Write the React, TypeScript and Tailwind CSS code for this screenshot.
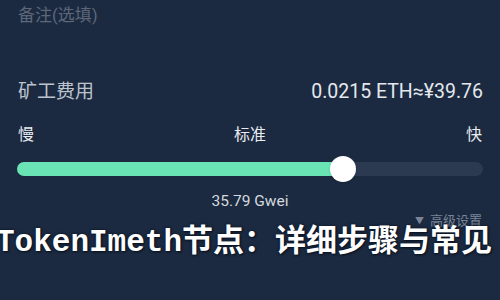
import React from 'react'

const Slider = ({ value }: { value: number }) => {
  // value: 0..1, track is 466px wide
  const fill = Math.round(466 * value)
  return (
    <div className="relative h-[14px] w-full rounded-full bg-[#2c3a51]">
      <div className="h-full rounded-full bg-[#6ae4b5]" style={{ width: fill }} />
      <div
        className="absolute top-1/2 h-[26px] w-[26px] -translate-x-1/2 -translate-y-1/2 rounded-full bg-white shadow"
        style={{ left: fill }}
      />
    </div>
  )
}

export default function App() {
  return (
    <div
      className="relative h-[300px] w-[500px] overflow-hidden bg-[#1b2a40]"
      style={{ fontFamily: "Roboto, 'Noto Sans CJK SC', sans-serif" }}
    >
      <div className="flex flex-col px-[17px] pt-[5px]">
        <div className="h-[20px] pl-[1px] text-[17px] leading-[20px] text-[#5d6779]">备注(选填)</div>

        <div className="mt-[55px] flex h-[24px] items-center justify-between pl-[1px]">
          <span className="text-[19px] leading-[24px] text-[#bcc3cd]">矿工费用</span>
          <span className="text-[19.5px] leading-[24px] text-[#e4e8ed]">0.0215 ETH≈¥39.76</span>
        </div>

        <div className="mt-[21px] flex h-[20px] items-center justify-between px-[1px] text-[16px] leading-[20px] text-[#e8ebef]">
          <span>慢</span>
          <span>标准</span>
          <span>快</span>
        </div>

        <div className="mt-[17px]">
          <Slider value={0.7} />
        </div>

        <div className="mt-[16px] h-[18px] text-center text-[15.5px] leading-[18px] text-[#d5d9df]">35.79 Gwei</div>

        <div className="mt-[3px] flex h-[16px] items-center justify-end gap-[6px] pr-[1px] text-[13px] leading-[16px] text-[#7a8496]">
          <span className="text-[9px]">▼</span>
          <span>高级设置</span>
        </div>
      </div>

      <div
        className="absolute left-[-4px] top-[220px] whitespace-nowrap text-[31px] font-bold leading-[36px] text-white"
        style={{ textShadow: '0 0 3px #0b1322, 1px 1px 2px #0b1322' }}
      >
        <span style={{ fontFamily: "'Liberation Mono', monospace" }}>TokenImeth</span>
        <span style={{ fontFamily: "'Noto Sans CJK SC', sans-serif" }}>节点：详细步骤与常见</span>
      </div>
    </div>
  )
}
